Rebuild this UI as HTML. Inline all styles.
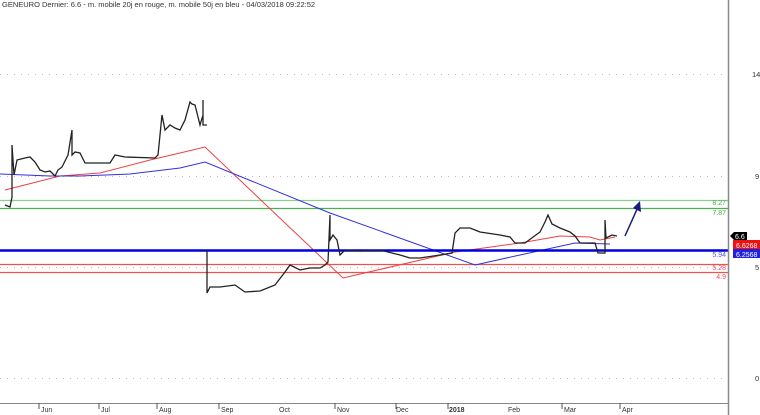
<!DOCTYPE html>
<html><head><meta charset="utf-8"><style>
html,body{margin:0;padding:0;background:#fff;width:760px;height:415px;overflow:hidden}
svg{display:block}
text{font-family:"Liberation Sans",sans-serif}
</style></head><body>
<svg width="760" height="415" viewBox="0 0 760 415" xmlns="http://www.w3.org/2000/svg">
<text x="2" y="7" font-size="7.5" fill="#333">GENEURO Dernier: 6.6 - m. mobile 20j en rouge, m. mobile 50j en bleu - 04/03/2018 09:22:52</text>
<g stroke="#bbb" stroke-width="1" stroke-dasharray="1,6">
<line x1="0" y1="74.5" x2="728" y2="74.5"/>
<line x1="0" y1="176.5" x2="728" y2="176.5"/>
<line x1="0" y1="267.5" x2="728" y2="267.5"/>
<line x1="0" y1="378.5" x2="728" y2="378.5"/>
</g>
<line x1="0" y1="200.5" x2="728" y2="200.5" stroke="#8ccf8c" stroke-width="1.3"/>
<line x1="0" y1="208.5" x2="728" y2="208.5" stroke="#4caf4c" stroke-width="1.3"/>
<line x1="0" y1="264.5" x2="728" y2="264.5" stroke="#f05050" stroke-width="1.3"/>
<line x1="0" y1="272.5" x2="728" y2="272.5" stroke="#f05050" stroke-width="1.3"/>
<polyline fill="none" stroke="#f04040" stroke-width="1" points="5,190 60,176 100,173 150,160 180,153 205,147 343,278 455,252 520,243 560,236 590,237 600,240 615,237"/>
<polyline fill="none" stroke="#3030e0" stroke-width="1" points="0,174 50,176 80,176 130,174 180,168 205,162 330,213 475,265 520,255 575,243 610,244"/>
<line x1="0" y1="250.5" x2="728" y2="250.5" stroke="#0000e0" stroke-width="2.5"/>
<polyline fill="none" stroke="#222" stroke-width="1.3" points="5,205 10,207 12,197 12,145 14,175 17,160 25,158 30,157 35,162 40,170 45,172 50,171 55,176 58,170 62,167 68,155 72,130 72,155 75,152 80,153 85,163 95,163 110,163 115,155 125,157 155,158 158,155 160,135 162,115 165,130 170,125 175,128 180,130 185,120 190,102 192,104 195,105 200,125 203,115 203,100 203,125 207,125"/>
<polyline fill="none" stroke="#222" stroke-width="1.3" points="207,250 207,293 210,287 220,287 235,285 245,292 260,291 275,285 285,272 290,265 300,270 310,268 320,268 325,265 328,262 330,215 330,240 333,235 337,240 340,255 345,250 360,251 380,250 400,255 410,258 420,258 440,255 452,253 455,233 460,228 470,228 480,232 500,235 510,237 515,243 525,243 540,232 545,222 548,215 552,224 560,228 570,232 575,236 580,243 595,243 598,253 605,253 605,220 606,238 612,235 617,236"/>
<line x1="625" y1="236" x2="638" y2="207" stroke="#1a1a80" stroke-width="1.5"/>
<polygon points="640,201 641,212 633,208" fill="#1a1a80"/>
<line x1="728.5" y1="0" x2="728.5" y2="415" stroke="#888" stroke-width="1.5"/>
<line x1="0" y1="403.5" x2="728" y2="403.5" stroke="#888" stroke-width="1"/>
<g font-size="7" text-anchor="end">
<text x="726" y="205" fill="#4caf4c">8.27</text>
<text x="726" y="215" fill="#4caf4c">7.87</text>
<text x="726" y="257" fill="#5555ff">5.94</text>
<text x="726" y="270" fill="#f05050">5.28</text>
<text x="726" y="279" fill="#f05050">4.9</text>
</g>
<polygon points="730,236 734,232 747,232 747,240 734,240" fill="#000"/>
<text x="735" y="239" font-size="7" fill="#fff">6.6</text>
<rect x="733" y="240" width="27" height="9" fill="#f01010"/>
<text x="736" y="248" font-size="7" fill="#fff">6.6268</text>
<rect x="733" y="249" width="27" height="9" fill="#2020e0"/>
<text x="736" y="257" font-size="7" fill="#fff">6.2568</text>
<g font-size="7.5" fill="#333">
<text x="752" y="77">14</text>
<text x="755" y="179">9</text>
<text x="755" y="270">5</text>
<text x="755" y="381">0</text>
</g>
<g stroke="#555"><line x1="39" y1="403" x2="39" y2="409"/><line x1="99" y1="403" x2="99" y2="409"/><line x1="157" y1="403" x2="157" y2="409"/><line x1="219" y1="403" x2="219" y2="409"/><line x1="335" y1="403" x2="335" y2="409"/><line x1="396" y1="403" x2="396" y2="409"/><line x1="448" y1="403" x2="448" y2="409"/><line x1="562" y1="403" x2="562" y2="409"/><line x1="620" y1="403" x2="620" y2="409"/></g>
<g font-size="7" fill="#333">
<text x="41" y="412">Jun</text><text x="101" y="412">Jul</text><text x="159" y="412">Aug</text><text x="221" y="412">Sep</text><text x="279" y="412">Oct</text><text x="337" y="412">Nov</text><text x="396" y="412">Dec</text><text x="449" y="412" font-weight="bold">2018</text><text x="508" y="412">Feb</text><text x="564" y="412">Mar</text><text x="622" y="412">Apr</text>
</g>
</svg>
</body></html>
